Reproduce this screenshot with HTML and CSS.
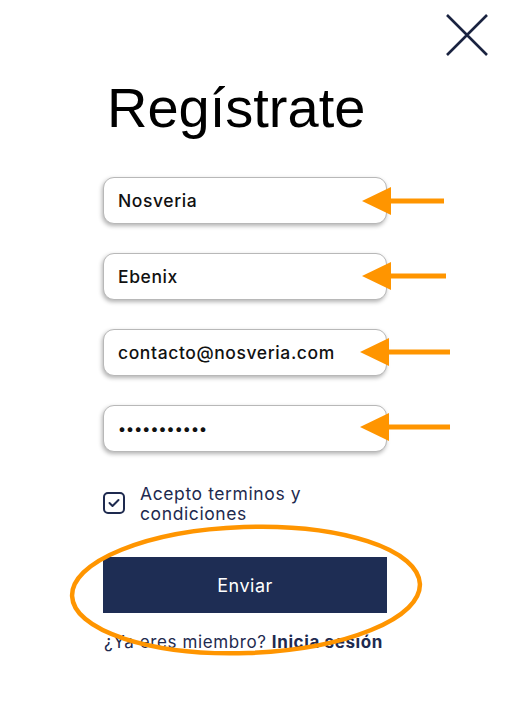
FILE: index.html
```html
<!DOCTYPE html>
<html lang="es">
  <head>
    <meta charset="UTF-8" />
    <meta name="viewport" content="width=device-width, initial-scale=1.0" />
    <title>Regístrate</title>
    <link rel="stylesheet" href="styles.css">
  </head>

  <body>
    <div class="page">
      <!-- Close button -->
      <button class="close" type="button" aria-label="Cerrar">
        <svg width="44" height="44" viewBox="0 0 44 44">
          <path d="M2 2 L42 42 M42 2 L2 42" stroke="#1a2340" stroke-width="2.6" fill="none" />
        </svg>
      </button>

      <div class="container">
        <h1>Regístrate</h1>
        <form id="register-form">
          <input type="text" class="field" value="Nosveria" />
          <input type="text" class="field" value="Ebenix" />
          <input type="email" class="field" value="contacto@nosveria.com" />
          <input type="password" class="field" value="contraseña1" />

          <label class="terms">
            <span class="check">
              <svg width="12" height="10" viewBox="0 0 12 10">
                <path d="M1.5 5 L4.5 8 L10.5 2" stroke="#1e2a4f" stroke-width="2" fill="none" stroke-linecap="round" stroke-linejoin="round" />
              </svg>
            </span>
            <span>Acepto terminos y condiciones</span>
          </label>

          <button type="submit" class="submit">Enviar</button>
        </form>
        <p class="member">¿Ya eres miembro? <strong>Inicia sesión</strong></p>
      </div>

      <!-- Annotations drawn over the form -->
      <svg class="marks" width="507" height="709" viewBox="0 0 507 709">
        <g fill="#ff9500">
          <polygon points="362,201 391,187 391,215" />
          <rect x="389" y="198.5" width="55" height="5" />
          <polygon points="362,276 391,262 391,290" />
          <rect x="389" y="273.5" width="57" height="5" />
          <polygon points="360,352 389,338 389,366" />
          <rect x="387" y="349.5" width="63" height="5" />
          <polygon points="360,427 389,413 389,441" />
          <rect x="387" y="424.5" width="63" height="5" />
        </g>
        <ellipse cx="246" cy="590" rx="174" ry="63" transform="rotate(-2 246 590)" fill="none" stroke="#ff9500" stroke-width="4.5" />
      </svg>
    </div>
  </body>
</html>
```

FILE: styles.css
```css
body {
  margin: 0;
  background: #fff;
  font-family: Inter, "Noto Sans", sans-serif;
}

.page {
  position: relative;
  width: 507px;
  height: 709px;
  overflow: hidden;
}

.close {
  position: absolute;
  top: 13px;
  left: 445px;
  padding: 0;
  border: none;
  background: none;
  line-height: 0;
}

.container {
  width: 284px;
  margin-left: 103px;
  padding-top: 75px;
}

h1 {
  margin: 0 0 36px 4px;
  font-family: "Liberation Sans", Arial, sans-serif;
  font-weight: normal;
  font-size: 56px;
  line-height: 66px;
  color: #000;
}

form {
  display: flex;
  flex-direction: column;
}

.field {
  box-sizing: border-box;
  width: 284px;
  height: 47px;
  margin-bottom: 29px;
  padding: 0 14px;
  border: 1px solid #b8b8b8;
  border-radius: 11px;
  box-shadow: -1px 2px 4px rgba(0, 0, 0, 0.3);
  font-family: Inter, "Noto Sans", sans-serif;
  font-size: 17.5px;
  font-weight: 500;
  letter-spacing: 0.6px;
  color: #111;
  outline: none;
}

.field[type="password"] {
  font-size: 15px;
  letter-spacing: 0.1px;
}

.terms {
  display: flex;
  gap: 15px;
  margin-top: 3px;
  font-size: 17.5px;
  line-height: 20px;
  letter-spacing: 0.6px;
  color: #1e2a4f;
}

.terms span:last-child {
  width: 200px;
}

.check {
  box-sizing: border-box;
  flex: none;
  display: flex;
  align-items: center;
  justify-content: center;
  width: 22px;
  height: 22px;
  margin-top: 8px;
  border: 2px solid #1e2a4f;
  border-radius: 5px;
}

.submit {
  height: 56px;
  margin-top: 33px;
  border: none;
  background: #1e2d54;
  color: #fff;
  font-family: Inter, "Noto Sans", sans-serif;
  font-size: 18px;
  letter-spacing: 0.5px;
}

.member {
  margin: 19px 0 0 1px;
  font-size: 17px;
  letter-spacing: 0.6px;
  color: #1e2a4f;
  white-space: nowrap;
}

.member strong {
  font-weight: 700;
}

.marks {
  position: absolute;
  top: 0;
  left: 0;
  pointer-events: none;
}
```
